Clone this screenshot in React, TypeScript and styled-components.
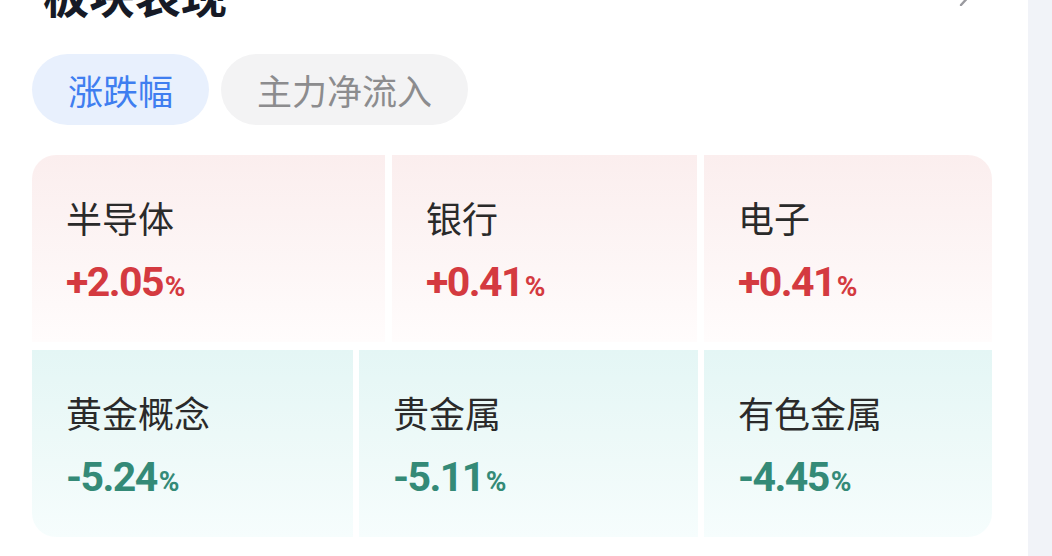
import styled, { createGlobalStyle } from 'styled-components';

type Trend = 'up' | 'down';

interface Sector {
    name: string;
    change: string;
}

const rows: { trend: Trend; columns: string; items: Sector[] }[] = [
    {
        trend: 'up',
        columns: '353px 305px 288px',
        items: [
            { name: '半导体', change: '+2.05' },
            { name: '银行', change: '+0.41' },
            { name: '电子', change: '+0.41' },
        ],
    },
    {
        trend: 'down',
        columns: '321px 339px 288px',
        items: [
            { name: '黄金概念', change: '-5.24' },
            { name: '贵金属', change: '-5.11' },
            { name: '有色金属', change: '-4.45' },
        ],
    },
];

const GlobalStyle = createGlobalStyle`
  html, body {
    margin: 0;
    padding: 0;
    background: #ffffff;
    overflow: hidden;
  }
  body {
    font-family: "Noto Sans CJK SC", "Noto Sans", sans-serif;
  }
`;

const ChevronRight = () => (
    <svg width="16" height="26" viewBox="0 0 16 26" fill="none">
        <path d="M3 1 L14 13 L3 25" stroke="#9a9a9f" strokeWidth="2.4" strokeLinecap="round" strokeLinejoin="round" />
    </svg>
);

export default function App() {
    return (
        <Page>
            <GlobalStyle />
            <Main>
                <Header>
                    <Title>板块表现</Title>
                    <ChevronRight />
                </Header>
                <Tabs>
                    <Tab active>涨跌幅</Tab>
                    <Tab>主力净流入</Tab>
                </Tabs>
                <Board>
                    {rows.map((row, r) => (
                        <Row key={r} columns={row.columns}>
                            {row.items.map((item) => (
                                <Cell key={item.name} trend={row.trend}>
                                    <Name>{item.name}</Name>
                                    <Change trend={row.trend}>
                                        {item.change}
                                        <Percent>%</Percent>
                                    </Change>
                                </Cell>
                            ))}
                        </Row>
                    ))}
                </Board>
            </Main>
            <SideStrip />
        </Page>
    );
}

const Page = styled.div`
  display: flex;
  width: 1052px;
  height: 556px;
  overflow: hidden;
`;

const Main = styled.div`
  flex: 1;
  padding: 0 36px 0 32px;
  display: flex;
  flex-direction: column;
`;

const SideStrip = styled.div`
  width: 24px;
  background: #f1f3f8;
`;

const Header = styled.div`
  display: flex;
  align-items: center;
  justify-content: space-between;
  margin-top: -30px;
  padding: 0 18px 0 11px;
`;

const Title = styled.h2`
  margin: 0;
  font-size: 46px;
  line-height: 46px;
  font-weight: 700;
  color: #161a26;
`;

const Tabs = styled.div`
  display: flex;
  gap: 12px;
  margin-top: 38px;
`;

const Tab = styled.div<{ active?: boolean }>`
  height: 71px;
  padding: 0 36px;
  border-radius: 36px;
  display: flex;
  align-items: center;
  font-size: 35px;
  color: ${(p) => (p.active ? '#3f7ef0' : '#8c8c8e')};
  background: ${(p) => (p.active ? '#e8f0fd' : '#f3f3f4')};
`;

const Board = styled.div`
  margin-top: 30px;
  display: flex;
  flex-direction: column;
  gap: 8px;
  border-radius: 24px;
  overflow: hidden;
`;

const Row = styled.div<{ columns: string }>`
  display: grid;
  grid-template-columns: ${(p) => p.columns};
  justify-content: space-between;
  height: 187px;
`;

const Cell = styled.div<{ trend: Trend }>`
  padding: 44px 34px 0;
  background: ${(p) =>
        p.trend === 'up'
            ? 'linear-gradient(180deg, #fbeeee 0%, #fdf6f6 60%, #fffcfc 100%)'
            : 'linear-gradient(180deg, #e4f6f5 0%, #effaf9 60%, #f6fdfd 100%)'};
`;

const Name = styled.div`
  font-size: 36px;
  line-height: 36px;
  color: #2a2a2a;
`;

const Change = styled.div<{ trend: Trend }>`
  margin-top: 27px;
  font-family: Roboto, "Liberation Sans", sans-serif;
  font-weight: 700;
  font-size: 41px;
  line-height: 40px;
  letter-spacing: -1.6px;
  color: ${(p) => (p.trend === 'up' ? '#d43a40' : '#348a77')};
`;

const Percent = styled.span`
  font-size: 28px;
  font-weight: 700;
  letter-spacing: 0;
  margin-left: 2px;
`;
